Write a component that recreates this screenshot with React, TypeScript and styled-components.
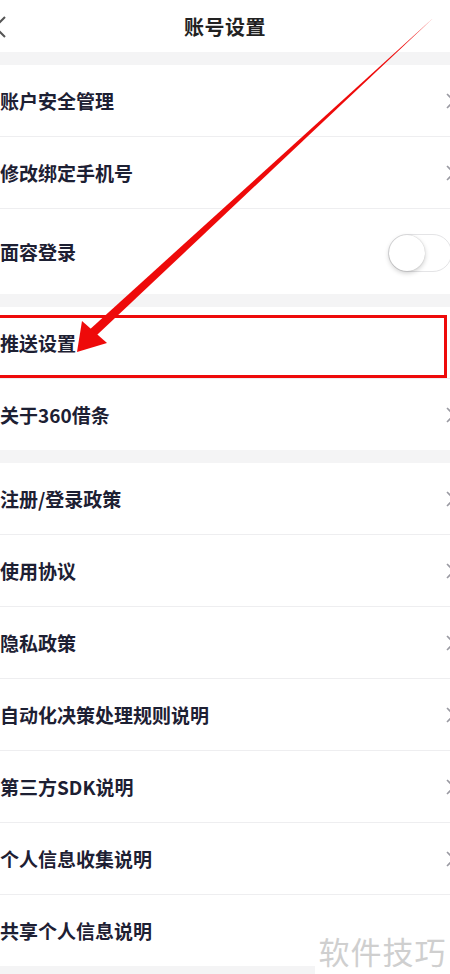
import styled, { createGlobalStyle } from 'styled-components';

const GlobalStyle = createGlobalStyle`
  html, body {
    margin: 0;
    padding: 0;
    background: #ffffff;
    overflow-x: hidden;
  }
  body {
    font-family: "Noto Sans CJK SC", "Noto Sans", sans-serif;
  }
`;

interface Item {
  label: string;
  toggle?: boolean;
  plain?: boolean;
}

const sections: Item[][] = [
  [{ label: '账户安全管理' }, { label: '修改绑定手机号' }, { label: '面容登录', toggle: true }],
  [{ label: '推送设置', plain: true }, { label: '关于360借条' }],
  [
    { label: '注册/登录政策' },
    { label: '使用协议' },
    { label: '隐私政策' },
    { label: '自动化决策处理规则说明' },
    { label: '第三方SDK说明' },
    { label: '个人信息收集说明' },
    { label: '共享个人信息说明' },
  ],
];

function ChevronRight() {
  return (
    <ChevronBox width="10" height="16" viewBox="0 0 10 16">
      <path d="M1 1 L8 8 L1 15" fill="none" stroke="#9a9aa2" strokeWidth="1.6" />
    </ChevronBox>
  );
}

function App() {
  return (
    <Page>
      <GlobalStyle />
      <Header>
        <BackIcon width="12" height="22" viewBox="0 0 12 22">
          <path d="M11 1 L1 11 L11 21" fill="none" stroke="#555" strokeWidth="2" />
        </BackIcon>
        <Title>账号设置</Title>
        <span />
      </Header>

      {sections.map((items, si) => (
        <div key={si}>
          <Gap />
          <Section>
            {items.map((item) => (
              <Row key={item.label} $tall={item.toggle}>
                <Label>{item.label}</Label>
                {item.toggle ? (
                  <Switch>
                    <Knob />
                  </Switch>
                ) : item.plain ? null : (
                  <ChevronRight />
                )}
              </Row>
            ))}
          </Section>
        </div>
      ))}
      <Gap />

      <Highlight />
      <Arrow width="450" height="400" viewBox="0 0 450 400">
        <polygon points="432.7,18.5 431.3,19.7 88.9,330.2 95.1,336.8" fill="#ee0a0a" />
        <polygon points="77,352 82,321 107,343" fill="#ee0a0a" />
      </Arrow>
      <Watermark>软件技巧</Watermark>
    </Page>
  );
}

const Page = styled.div`
  position: relative;
  width: 450px;
  min-height: 974px;
  overflow: hidden;
  background: #ffffff;
`;

const Header = styled.div`
  height: 52px;
  display: grid;
  grid-template-columns: 1fr auto 1fr;
  align-items: center;
`;

const BackIcon = styled.svg`
  margin-left: -6px;
  margin-top: 2px;
`;

const Title = styled.div`
  font-size: 20px;
  font-weight: 600;
  color: #222;
  letter-spacing: 0.5px;
`;

const Gap = styled.div`
  height: 13px;
  background: #f4f4f5;
`;

const Section = styled.div`
  background: #fff;
`;

const Row = styled.div<{ $tall?: boolean }>`
  height: ${(p) => (p.$tall ? '85px' : '71px')};
  display: flex;
  align-items: center;
  justify-content: space-between;
  & + & {
    border-top: 1px solid #eeeef0;
  }
`;

const Label = styled.div`
  font-size: 19px;
  font-weight: 600;
  color: #1d2033;
`;

const ChevronBox = styled.svg`
  margin-right: -6px;
  flex: none;
`;

const Switch = styled.div`
  width: 64px;
  height: 38px;
  box-sizing: border-box;
  border: 1px solid #e4e4e6;
  border-radius: 19px;
  margin-right: -2px;
  margin-top: 2px;
  display: flex;
  align-items: center;
  background: #fff;
`;

const Knob = styled.div`
  width: 36px;
  height: 36px;
  border-radius: 50%;
  background: #fff;
  box-shadow: 0 2px 5px rgba(0, 0, 0, 0.2), 0 0 1px rgba(0, 0, 0, 0.25);
`;

const Highlight = styled.div`
  position: absolute;
  left: -3px;
  top: 315px;
  width: 450px;
  height: 63px;
  box-sizing: border-box;
  border: 3px solid #ee0a0a;
  pointer-events: none;
`;

const Arrow = styled.svg`
  position: absolute;
  left: 0;
  top: 0;
  pointer-events: none;
`;

const Watermark = styled.div`
  position: absolute;
  right: 0;
  bottom: 0;
  width: 135px;
  height: 58px;
  background: #fff;
  color: #cfcfcf;
  font-size: 31px;
  font-weight: 400;
  display: flex;
  align-items: center;
  justify-content: center;
  letter-spacing: 1px;
`;

export default App;
